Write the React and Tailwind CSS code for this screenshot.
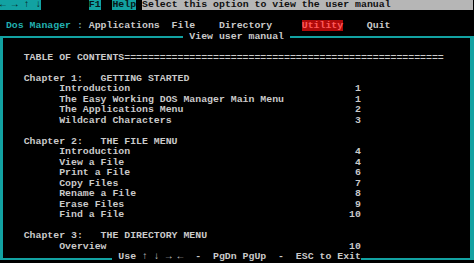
import React from 'react';

const TEAL = 'bg-[#12a2a2]';

const chapters = [
  {
    title: 'Chapter 1:   GETTING STARTED',
    items: [
      ['Introduction', '1'],
      ['The Easy Working DOS Manager Main Menu', '1'],
      ['The Applications Menu', '2'],
      ['Wildcard Characters', '3'],
    ],
  },
  {
    title: 'Chapter 2:   THE FILE MENU',
    items: [
      ['Introduction', '4'],
      ['View a File', '4'],
      ['Print a File', '6'],
      ['Copy Files', '7'],
      ['Rename a File', '8'],
      ['Erase Files', '9'],
      ['Find a File', '10'],
    ],
  },
  {
    title: 'Chapter 3:   THE DIRECTORY MENU',
    items: [['Overview', '10']],
  },
];

function Row({ children }) {
  return <div className="h-[10.52px] whitespace-pre">{children}</div>;
}

// one line inside the box: side borders + text
function BoxLine({ children }) {
  return (
    <div className="h-[10.52px] whitespace-pre border-l-[3px] border-r-[4px] border-[#12a2a2] pl-[calc(4ch-3px)]">
      {children}
    </div>
  );
}

function Item({ name, page }) {
  return (
    <BoxLine>
      <div className="ml-[6ch] w-[51ch] flex justify-between">
        <span>{name}</span>
        <span>{page}</span>
      </div>
    </BoxLine>
  );
}

export default function App() {
  const lines = [];
  lines.push(<BoxLine key="b0"> </BoxLine>);
  lines.push(
    <BoxLine key="toc">
      {'TABLE OF CONTENTS' + '='.repeat(54)}
    </BoxLine>
  );
  chapters.forEach((ch, i) => {
    lines.push(<BoxLine key={'s' + i}> </BoxLine>);
    lines.push(<BoxLine key={'c' + i}>{ch.title}</BoxLine>);
    ch.items.forEach(([n, p], j) => {
      lines.push(<Item key={'i' + i + '-' + j} name={n} page={p} />);
    });
  });

  return (
    <div
      className="w-[474px] h-[263px] overflow-hidden bg-black text-[#cacaca] font-bold text-[9.873px] leading-[10.52px]"
      style={{ fontFamily: '"Liberation Mono", "DejaVu Sans Mono", monospace' }}
    >
      {/* top help bar */}
      <Row>
        <span className={`${TEAL} text-[#061818]`}>{'← → ↑ ↓'}</span>
        {'        '}
        <span className={`${TEAL} text-[#061818]`}>F1</span>
        {'  '}
        <span className={`${TEAL} text-[#061818]`}>Help</span>
        {' '}
        <span className="bg-[#b6b6b6] text-[#101010]">
          {'Select this option to view the user manual              '}
        </span>
      </Row>
      <Row> </Row>

      {/* menu bar */}
      <Row>
        {' '}
        <span className="text-[#22b0b0]">Dos Manager</span>
        <span className="text-[#6fa6a6]">{' : '}</span>
        {'Applications  File    Directory     '}
        <span className="bg-[#b00a0a] text-[#ff5a5a]">Utility</span>
        {'    Quit'}
      </Row>

      {/* box top */}
      <div className="h-[10.52px] flex whitespace-pre">
        <div className="w-[31ch] pt-[4.5px]">
          <div className="h-full border-l-[3px] border-t-[2px] border-[#12a2a2]" />
        </div>
        <span>{' View user manual '}</span>
        <div className="flex-1 pt-[4.5px]">
          <div className="h-full border-r-[4px] border-t-[2px] border-[#12a2a2]" />
        </div>
      </div>

      {lines}

      {/* box bottom */}
      <div className="h-[10.52px] flex whitespace-pre">
        <div className="w-[19ch] pb-[3px]">
          <div className="h-full border-l-[3px] border-b-[2px] border-[#12a2a2]" />
        </div>
        <span>{' Use ↑ ↓ → ←  -  PgDn PgUp  -  ESC to Exit'}</span>
        <div className="flex-1 pb-[3px]">
          <div className="h-full border-r-[4px] border-b-[2px] border-[#12a2a2]" />
        </div>
      </div>
    </div>
  );
}
